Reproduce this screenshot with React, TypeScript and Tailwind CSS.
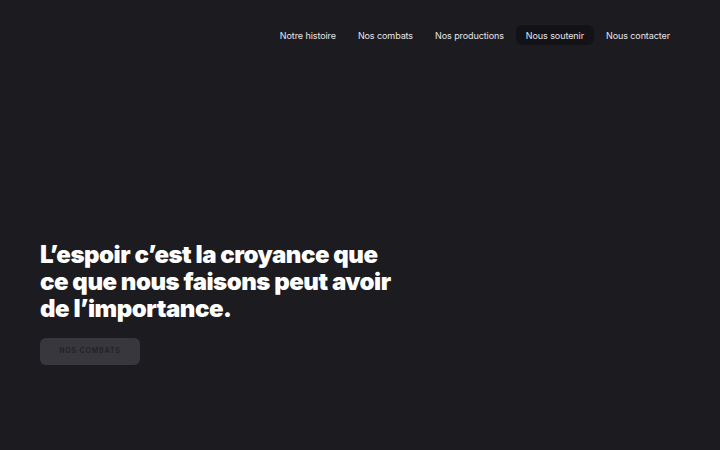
import React from 'react';

const links = ['Notre histoire', 'Nos combats', 'Nos productions', 'Nous soutenir', 'Nous contacter'];

export default function App() {
  return (
    <div
      className="min-h-[450px] w-full bg-[#1c1b20] text-white flex flex-col"
      style={{ fontFamily: 'Inter, "Liberation Sans", sans-serif' }}
    >
      <header className="flex justify-end pt-[25px] pr-[40px]">
        <nav className="flex gap-[2px]">
          {links.map((l) => (
            <a
              key={l}
              className={`h-[20px] px-[10px] flex items-center rounded-md text-[9px] tracking-[-0.01em] leading-none text-[#e6e5ea] ${
                l === 'Nous soutenir' ? 'bg-[#131217]' : ''
              }`}
            >
              {l}
            </a>
          ))}
        </nav>
      </header>

      <main className="pl-[40px] pt-[196px]">
        <h1 className="text-[24px] leading-[27px] font-black tracking-[-0.02em] text-white">
          L’espoir c’est la croyance que
          <br />
          ce que nous faisons peut avoir
          <br />
          de l’importance.
        </h1>
        <button className="mt-[16px] w-[100px] h-[27px] rounded-md bg-[#38373d] text-[7px] font-semibold tracking-[0.12em] uppercase text-[#222126]">
          Nos combats
        </button>
      </main>
    </div>
  );
}
